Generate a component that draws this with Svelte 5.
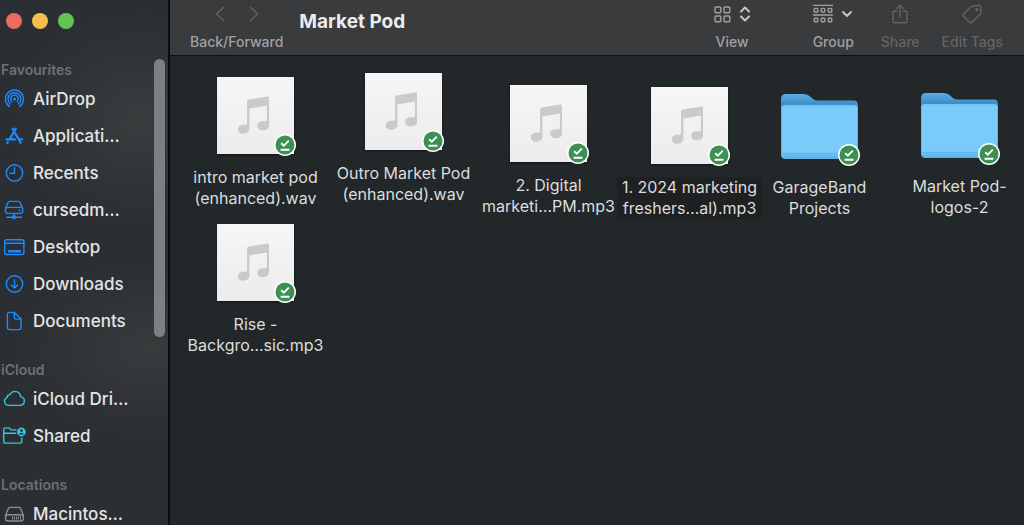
<script lang="ts">
  type Place = { name: string; icon: string };
  type Section = { title: string; tint: string; places: Place[] };
  type Item = { kind: 'audio' | 'folder'; lines: string[]; x: number; y: number };

  const sections: Section[] = [
    {
      title: 'Favourites',
      tint: 'blue',
      places: [
        { name: 'AirDrop', icon: 'airdrop' },
        { name: 'Applicati…', icon: 'apps' },
        { name: 'Recents', icon: 'clock' },
        { name: 'cursedm…', icon: 'server' },
        { name: 'Desktop', icon: 'desktop' },
        { name: 'Downloads', icon: 'download' },
        { name: 'Documents', icon: 'document' }
      ]
    },
    {
      title: 'iCloud',
      tint: 'cyan',
      places: [
        { name: 'iCloud Dri…', icon: 'cloud' },
        { name: 'Shared', icon: 'shared' }
      ]
    },
    {
      title: 'Locations',
      tint: 'grey',
      places: [{ name: 'Macintos…', icon: 'disk' }]
    }
  ];

  // x/y: where the user dropped each item in the window
  const items: Item[] = [
    { kind: 'audio', lines: ['intro market pod', '(enhanced).wav'], x: 11, y: 21 },
    { kind: 'audio', lines: ['Outro Market Pod', '(enhanced).wav'], x: 159, y: 17 },
    { kind: 'audio', lines: ['2. Digital', 'marketi…PM.mp3'], x: 304, y: 29 },
    { kind: 'audio', lines: ['1. 2024 marketing', 'freshers…al).mp3'], x: 445, y: 31 },
    { kind: 'folder', lines: ['GarageBand', 'Projects'], x: 575, y: 31 },
    { kind: 'folder', lines: ['Market Pod-', 'logos-2'], x: 715, y: 30 },
    { kind: 'audio', lines: ['Rise -', 'Backgro…sic.mp3'], x: 11, y: 168 }
  ];

  let selected = $state(3);
</script>

<svelte:head><title>Market Pod</title></svelte:head>

{#snippet placeIcon(icon: string)}
  <svg class="place-icon" viewBox="0 0 28 24" aria-hidden="true">
    {#if icon === 'airdrop'}
      <path d="M9.3 19.4A9 9 0 1 1 19.7 19.4" />
      <path d="M10.4 17A6.4 6.4 0 1 1 18.6 17" />
      <path d="M11.9 14.7A3.8 3.8 0 1 1 17.1 14.7" />
      <circle class="solid" cx="14.5" cy="12" r="1.5" />
    {:else if icon === 'apps'}
      <path class="thick" d="M15.8 4.6 9.4 15.6M12.6 4.6 20.6 18.8M6.4 15.4H15M18.6 15.4H22M7.8 18.2 7.2 19.2" />
    {:else if icon === 'clock'}
      <circle cx="14.5" cy="12" r="8.2" />
      <path d="M14.5 6.6V12.3H10.2" />
    {:else if icon === 'server'}
      <path d="M9.8 3.4H18.4Q19.6 3.4 20.2 4.6L22.4 9.6Q24 15.4 20 15.4H8.2Q4.2 15.4 5.8 9.6L8 4.6Q8.6 3.4 9.8 3.4Z" />
      <path d="M5.8 10.2Q6.8 9.4 8.4 9.4H19.8Q21.4 9.4 22.4 10.2M14 15.8V19M6.8 19.2H21.4" />
      <circle class="solid" cx="14" cy="19.2" r="2.1" />
      <circle class="solid" cx="19.4" cy="12.4" r="0.9" />
    {:else if icon === 'desktop'}
      <rect x="4.7" y="4.7" width="19.2" height="14.8" rx="2" />
      <path d="M4.7 8.2H23.9" />
      <rect class="solid" x="8" y="15" width="13" height="2.6" rx="0.8" />
    {:else if icon === 'download'}
      <circle cx="14.5" cy="12" r="8.2" />
      <path d="M14.5 7.8V16M11.4 13.1 14.5 16.1 17.6 13.1" />
    {:else if icon === 'document'}
      <path d="M9.4 3.4H14.4L21 10V18.6Q21 20.6 19 20.6H9.4Q7.4 20.6 7.4 18.6V5.4Q7.4 3.4 9.4 3.4Z" />
      <path d="M14.3 3.6V8.6Q14.3 10.1 15.8 10.1H20.8" />
    {:else if icon === 'cloud'}
      <path d="M8.6 18.4A4.2 4.2 0 0 1 7.2 10.3Q7.2 7.8 9.9 7.8Q11.4 4.4 15 4.4Q19.8 4.6 20.6 9.6Q24.4 10.4 24.4 14Q24.2 18.2 20 18.4Z" />
    {:else if icon === 'shared'}
      <path d="M16 5.9H11L9.6 4.3Q9.2 3.9 8.6 3.9H5.6Q3.7 3.9 3.7 5.8V17.2Q3.7 19.1 5.6 19.1H19.9Q21.8 19.1 21.8 17.2V14" />
      <path d="M3.7 9.3H15.6" />
      <circle class="solid" cx="21.4" cy="8" r="4.4" />
      <circle class="cut" cx="21.4" cy="6.6" r="1.3" />
      <path class="cut" d="M18.9 10.4Q19.5 8.7 21.4 8.7T23.9 10.4Z" />
    {:else if icon === 'disk'}
      <path d="M10 5.4H19Q20.1 5.4 20.6 6.4L23.4 13.2V16.6Q23.4 19 21 19H7.9Q5.5 19 5.5 16.6V13.2L8.4 6.4Q8.9 5.4 10 5.4Z" />
      <path d="M5.6 14.6Q6.2 12.8 8 12.8H20.9Q22.7 12.8 23.3 14.6" />
      <path class="fine" d="M12.5 14.8V17.2M14.5 14.8V17.2M16.5 14.8V17.2M18.5 14.8V17.2M20.5 14.8V17.2" />
    {/if}
  </svg>
{/snippet}

<div class="window">
  <aside class="sidebar">
    <div class="lights">
      <button type="button" class="light close" aria-label="Close"></button>
      <button type="button" class="light minimise" aria-label="Minimise"></button>
      <button type="button" class="light zoom" aria-label="Zoom"></button>
    </div>
    <nav class="places">
      {#each sections as section (section.title)}
        <section class={section.tint}>
          <h2>{section.title}</h2>
          <ul>
            {#each section.places as place (place.name)}
              <li>
                <a href={'#' + place.icon}>
                  {@render placeIcon(place.icon)}
                  <span>{place.name}</span>
                </a>
              </li>
            {/each}
          </ul>
        </section>
      {/each}
    </nav>
    <div class="scroll-thumb"></div>
  </aside>

  <main>
    <header class="toolbar">
      <div class="tool nav-tool">
        <div class="icons">
          <button type="button" aria-label="Back" disabled>
            <svg width="10" height="16" viewBox="0 0 10 16"><path d="M8.5 1.5 1.5 8 8.5 14.5" /></svg>
          </button>
          <button type="button" aria-label="Forward" disabled>
            <svg width="10" height="16" viewBox="0 0 10 16"><path d="M1.5 1.5 8.5 8 1.5 14.5" /></svg>
          </button>
        </div>
        <span>Back/Forward</span>
      </div>

      <h1>Market Pod</h1>

      <button type="button" class="tool view-tool">
        <span class="icons">
          <svg width="17" height="17" viewBox="0 0 17 17">
            <rect x="1" y="1" width="5.8" height="5.8" rx="1" />
            <rect x="10" y="1" width="5.8" height="5.8" rx="1" />
            <rect x="1" y="10" width="5.8" height="5.8" rx="1" />
            <rect x="10" y="10" width="5.8" height="5.8" rx="1" />
          </svg>
          <svg class="chevron" width="12" height="16" viewBox="0 0 12 16">
            <path d="M2 5.5 6 1.5 10 5.5M2 10.5 6 14.5 10 10.5" />
          </svg>
        </span>
        <span>View</span>
      </button>

      <button type="button" class="tool group-tool">
        <span class="icons">
          <svg width="20" height="20" viewBox="0 0 20 20">
            <path d="M0.5 1.4H19.5M0.5 11H19.5" />
            <rect x="1.2" y="4.4" width="3.6" height="3.6" rx="0.8" />
            <rect x="8.2" y="4.4" width="3.6" height="3.6" rx="0.8" />
            <rect x="15.2" y="4.4" width="3.6" height="3.6" rx="0.8" />
            <rect x="1.2" y="14.2" width="3.6" height="3.6" rx="0.8" />
            <rect x="8.2" y="14.2" width="3.6" height="3.6" rx="0.8" />
            <rect x="15.2" y="14.2" width="3.6" height="3.6" rx="0.8" />
          </svg>
          <svg class="chevron" width="12" height="8" viewBox="0 0 12 8"><path d="M2 2 6 6 10 2" /></svg>
        </span>
        <span>Group</span>
      </button>

      <button type="button" class="tool" disabled>
        <span class="icons">
          <svg width="16" height="20" viewBox="0 0 16 20">
            <path d="M5 7.2H2.6Q1 7.2 1 8.8V17.2Q1 18.8 2.6 18.8H13.4Q15 18.8 15 17.2V8.8Q15 7.2 13.4 7.2H11M8 13V1.4M4.8 4.4 8 1.2 11.2 4.4" />
          </svg>
        </span>
        <span>Share</span>
      </button>

      <button type="button" class="tool" disabled>
        <span class="icons">
          <svg width="20" height="20" viewBox="0 0 20 20">
            <path d="M10.8 2.2 16.6 1.2Q18.6 1 18.8 3V8.6Q18.8 9.6 18 10.4L10.2 18Q8.8 19.3 7.4 18L1.8 12.6Q0.6 11.2 1.8 9.8L9.2 3Q9.8 2.4 10.8 2.2Z" />
            <circle cx="14.8" cy="5.4" r="0.8" />
          </svg>
        </span>
        <span>Edit Tags</span>
      </button>
    </header>

    <div class="canvas">
      {#each items as item, i (item.lines[0])}
        <button
          type="button"
          class="item"
          class:selected={selected === i}
          style:left="{item.x}px"
          style:top="{item.y}px"
          onclick={() => (selected = i)}
        >
          <span class="thumb {item.kind}">
            {#if item.kind === 'audio'}
              <svg viewBox="0 0 77 77" aria-hidden="true">
                <path
                  fill="#cacaca"
                  d="M30 24.6Q30 22.9 31.6 22.6L50.4 19.6Q52 19.4 52 21V48.4C52 51.6 49 53.3 45.6 53.3C42.4 53.3 40.2 51.4 40.2 48.8C40.2 46 42.6 44.3 45.8 44.3H48C49.4 44.3 49.9 43.6 49.9 42.4V28.6L32.4 31.4V51.6C32.4 54.8 29.8 56.8 26.4 56.8C23.2 56.8 20.9 55 20.9 52.4C20.9 49.6 23.2 47.8 26.4 47.8H28C29.4 47.8 30 47.2 30 46Z"
                />
              </svg>
            {:else}
              <svg viewBox="0 0 77 77" aria-hidden="true">
                <defs>
                  <linearGradient id="back" x1="0" y1="0" x2="0" y2="1">
                    <stop offset="0" stop-color="#5daee3" />
                    <stop offset="0.16" stop-color="#3f8ecb" />
                    <stop offset="1" stop-color="#4a9cd8" />
                  </linearGradient>
                  <linearGradient id="front" x1="0" y1="0" x2="0" y2="1">
                    <stop offset="0" stop-color="#6fc2f5" />
                    <stop offset="0.06" stop-color="#7acbfa" />
                    <stop offset="0.86" stop-color="#7acbfa" />
                    <stop offset="1" stop-color="#5aaee4" />
                  </linearGradient>
                </defs>
                <path fill="url(#back)" d="M0 12Q0 7 5 7H22Q26 7 28.5 9L32 12Q34 13.6 37 13.6H72.5Q77 13.6 77 18V66H0Z" />
                <path fill="url(#front)" d="M0 22Q0 18 4.5 18H72.5Q77 18 77 22V67.5Q77 72 72.5 72H4.5Q0 72 0 67.5Z" />
                <path stroke="#62b6ea" fill="none" d="M0.5 66.5H76.5M0.5 22V67M76.5 22V67" />
              </svg>
            {/if}
            <svg class="badge" viewBox="0 0 22 22" aria-hidden="true">
              <circle cx="11" cy="11" r="11" fill="#fff" />
              <circle cx="11" cy="11" r="9.5" fill="#3e8f55" />
              <path d="M7.2 9.2 9.8 11.6 14.8 6.6M6.6 15.7H15.4" fill="none" stroke="#fff" stroke-width="1.9" />
            </svg>
          </span>
          <span class="label">{item.lines[0]}<br />{item.lines[1]}</span>
        </button>
      {/each}
    </div>
  </main>
</div>

<style>
  :global(body) {
    margin: 0;
    background: #22272a;
  }
  .window {
    display: flex;
    height: 100vh;
    overflow: hidden;
    font-family: Inter, 'Liberation Sans', sans-serif;
    color: #e4e5e5;
  }
  button {
    appearance: none;
    border: 0;
    padding: 0;
    background: none;
    font: inherit;
    color: inherit;
  }

  .sidebar {
    position: relative;
    flex: 0 0 168px;
    display: flex;
    flex-direction: column;
    border-right: 2px solid #0c0d0e;
    background:
      radial-gradient(ellipse 130px 110px at 140px 120px, #393d3e, transparent),
      radial-gradient(ellipse 140px 90px at 150px 350px, #373c3d, transparent),
      #2b2e32;
  }
  .lights {
    display: flex;
    gap: 10px;
    padding: 13px 6px 30px;
  }
  .light {
    width: 16px;
    height: 16px;
    border-radius: 50%;
  }
  .close {
    background: #ec6a5e;
  }
  .minimise {
    background: #f4bf4f;
  }
  .zoom {
    background: #61c554;
  }
  .places {
    flex: 1;
    min-height: 0;
    overflow: hidden;
    display: flex;
    flex-direction: column;
    gap: 20px;
  }
  .blue {
    --tint: #1a8cff;
  }
  .cyan {
    --tint: #35c5de;
  }
  .grey {
    --tint: #8b8d8f;
  }
  h2 {
    margin: 0;
    padding-left: 1px;
    font-size: 14px;
    line-height: 21px;
    font-weight: 600;
    color: #6d7174;
  }
  ul {
    list-style: none;
    margin: 0;
    padding: 0;
  }
  .places a {
    display: flex;
    align-items: center;
    gap: 5px;
    height: 37px;
    font-size: 17px;
    font-weight: 500;
    color: inherit;
    text-decoration: none;
    white-space: nowrap;
  }
  .place-icon {
    flex: none;
    width: 28px;
    height: 24px;
    fill: none;
    stroke: var(--tint);
    stroke-width: 1.4;
    stroke-linecap: round;
    stroke-linejoin: round;
  }
  .place-icon .solid {
    fill: var(--tint);
    stroke: none;
  }
  .place-icon .cut {
    fill: #2b2e32;
    stroke: none;
  }
  .place-icon .thick {
    stroke-width: 2.2;
  }
  .place-icon .fine {
    stroke-width: 1;
  }
  .scroll-thumb {
    position: absolute;
    top: 59px;
    right: 3px;
    width: 11px;
    height: 278px;
    border-radius: 6px;
    background: #7d8082;
  }

  main {
    flex: 1;
    min-width: 0;
    display: flex;
    flex-direction: column;
  }
  .toolbar {
    display: flex;
    align-items: flex-start;
    gap: 22px;
    padding: 4px 21px 3px 20px;
    background: #3a3b3d;
    border-bottom: 1px solid #0e0f10;
  }
  .tool {
    display: flex;
    flex-direction: column;
    align-items: center;
    gap: 8px;
    font-size: 14px;
    line-height: 20px;
    font-weight: 500;
    color: #a0a1a2;
    white-space: nowrap;
  }
  .tool:disabled {
    color: #636466;
  }
  .icons {
    display: flex;
    align-items: center;
    justify-content: center;
    height: 20px;
    gap: 8px;
  }
  .tool svg {
    display: block;
    fill: none;
    stroke: currentColor;
    stroke-width: 1.4;
    stroke-linecap: round;
    stroke-linejoin: round;
  }
  .tool .chevron {
    stroke: #c4c5c6;
    stroke-width: 2;
  }
  .nav-tool .icons {
    gap: 24px;
    color: #636466;
  }
  h1 {
    flex: 1;
    margin: 5px 0 0 -6px;
    font-size: 19px;
    line-height: 26px;
    font-weight: 700;
    color: #ececec;
    white-space: nowrap;
  }
  .view-tool {
    margin-right: 40px;
  }
  .group-tool {
    margin-right: 5px;
  }

  .canvas {
    position: relative;
    flex: 1;
    background: #22272a;
  }
  .item {
    position: absolute;
    width: 149px;
    display: flex;
    flex-direction: column;
    align-items: center;
    gap: 13px;
  }
  .thumb {
    position: relative;
    width: 77px;
    height: 77px;
  }
  .thumb svg {
    display: block;
  }
  .audio {
    background: linear-gradient(#f6f6f6, #ececec);
    box-shadow: 0 1px 2px rgba(0, 0, 0, 0.5);
  }
  .thumb .badge {
    position: absolute;
    right: -2px;
    bottom: -2px;
    width: 22px;
    height: 22px;
  }
  .label {
    padding: 0 5px;
    border-radius: 4px;
    font-size: 16px;
    line-height: 21px;
    color: #dcdddd;
    white-space: nowrap;
  }
  .selected .label {
    background: #1f2022;
  }
</style>
